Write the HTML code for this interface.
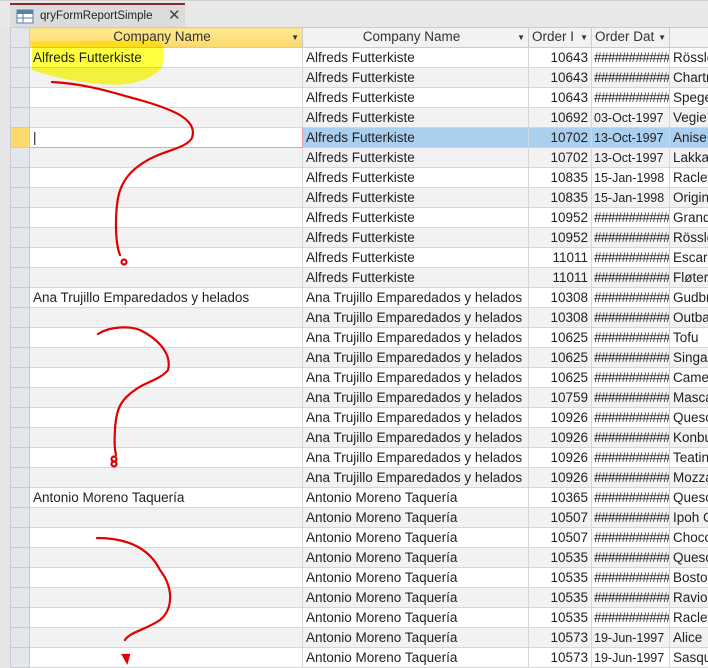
<!DOCTYPE html>
<html><head><meta charset="utf-8"><style>
*{margin:0;padding:0;box-sizing:border-box}
body{width:708px;height:665px;overflow:hidden;background:#e6e6e6;font-family:"Liberation Sans",sans-serif;font-size:13.5px;color:#222;position:relative}
#tabbar{position:absolute;left:0;top:0;width:708px;height:27px;background:#e8e8e8;border-top:1px solid #d0d0d0}
#tab{position:absolute;left:10px;top:2px;width:175px;height:25px;background:#dcdcdc;border-top:2px solid #8b2a2a}
#tab .t{position:absolute;left:30px;top:5px;font-size:11.5px;color:#222}
#tab .x{position:absolute;left:158px;top:1px;font-size:15px;color:#444}
#grid{position:absolute;left:10px;top:27px;width:760px}
table{border-collapse:collapse;table-layout:fixed;width:709px}
td{height:20px;border:1px solid #d4d7dc;white-space:nowrap;overflow:hidden;padding:0 3px;line-height:18px}
tr.h td{background:#e9edf2;border-color:#c8ccd2;color:#333}
tr.h td.y{background:linear-gradient(#fde993,#fcd96a);text-align:center}
td.s{background:#e3e6ea;border-color:#c8ccd2;padding:0}
tr:nth-child(even) td{background:#fff}
tr:nth-child(odd) td{background:#f2f2f2}
tr td.s{background:#e3e6ea!important}
td.n{text-align:right}
td.d{letter-spacing:-0.6px;padding:0 2px}
td.t{font-size:12.5px;padding:0 2px}
tr.sel td{background:#aacfef!important}
tr.sel td.s{background:#fcd96a!important}
tr.sel td.c1{background:#fff!important;border:1px solid #e8a0a8}
.dd{float:right;font-size:8px;margin-top:1px}
svg{position:absolute;left:0;top:0}
</style></head><body>
<div id="tabbar"><div id="tab">
<svg width="20" height="18" style="left:6px;top:3px"><rect x="1" y="2" width="16" height="13" fill="#fff" stroke="#5a7fa8"/><rect x="1" y="2" width="16" height="4" fill="#5a7fa8"/><line x1="1" y1="10" x2="17" y2="10" stroke="#5a7fa8"/><line x1="7" y1="6" x2="7" y2="15" stroke="#5a7fa8"/></svg>
<span class="t">qryFormReportSimple</span><span class="x">✕</span></div></div>
<div id="grid"><table>
<colgroup><col style="width:19px"><col style="width:273px"><col style="width:226px"><col style="width:63px"><col style="width:78px"><col style="width:50px"></colgroup>
<tr class="h"><td class="s"></td><td class="y">Company Name<span class="dd">▼</span></td><td style="text-align:center">Company Name<span class="dd">▼</span></td><td>Order I <span class="dd">▼</span></td><td>Order Dat <span class="dd">▼</span></td><td></td></tr>
<tr><td class="s"></td><td>Alfreds Futterkiste</td><td>Alfreds Futterkiste</td><td class="n">10643</td><td class="d">###########</td><td>Rössle</td></tr>
<tr><td class="s"></td><td></td><td>Alfreds Futterkiste</td><td class="n">10643</td><td class="d">###########</td><td>Chartr</td></tr>
<tr><td class="s"></td><td></td><td>Alfreds Futterkiste</td><td class="n">10643</td><td class="d">###########</td><td>Spege</td></tr>
<tr><td class="s"></td><td></td><td>Alfreds Futterkiste</td><td class="n">10692</td><td class="t">03-Oct-1997</td><td>Vegie</td></tr>
<tr class="sel"><td class="s"></td><td class="c1">|</td><td>Alfreds Futterkiste</td><td class="n">10702</td><td class="t">13-Oct-1997</td><td>Anise</td></tr>
<tr><td class="s"></td><td></td><td>Alfreds Futterkiste</td><td class="n">10702</td><td class="t">13-Oct-1997</td><td>Lakka</td></tr>
<tr><td class="s"></td><td></td><td>Alfreds Futterkiste</td><td class="n">10835</td><td class="t">15-Jan-1998</td><td>Raclet</td></tr>
<tr><td class="s"></td><td></td><td>Alfreds Futterkiste</td><td class="n">10835</td><td class="t">15-Jan-1998</td><td>Origin</td></tr>
<tr><td class="s"></td><td></td><td>Alfreds Futterkiste</td><td class="n">10952</td><td class="d">###########</td><td>Grand</td></tr>
<tr><td class="s"></td><td></td><td>Alfreds Futterkiste</td><td class="n">10952</td><td class="d">###########</td><td>Rössle</td></tr>
<tr><td class="s"></td><td></td><td>Alfreds Futterkiste</td><td class="n">11011</td><td class="d">###########</td><td>Escarg</td></tr>
<tr><td class="s"></td><td></td><td>Alfreds Futterkiste</td><td class="n">11011</td><td class="d">###########</td><td>Fløter</td></tr>
<tr><td class="s"></td><td>Ana Trujillo Emparedados y helados</td><td>Ana Trujillo Emparedados y helados</td><td class="n">10308</td><td class="d">###########</td><td>Gudbr</td></tr>
<tr><td class="s"></td><td></td><td>Ana Trujillo Emparedados y helados</td><td class="n">10308</td><td class="d">###########</td><td>Outba</td></tr>
<tr><td class="s"></td><td></td><td>Ana Trujillo Emparedados y helados</td><td class="n">10625</td><td class="d">###########</td><td>Tofu</td></tr>
<tr><td class="s"></td><td></td><td>Ana Trujillo Emparedados y helados</td><td class="n">10625</td><td class="d">###########</td><td>Singap</td></tr>
<tr><td class="s"></td><td></td><td>Ana Trujillo Emparedados y helados</td><td class="n">10625</td><td class="d">###########</td><td>Came</td></tr>
<tr><td class="s"></td><td></td><td>Ana Trujillo Emparedados y helados</td><td class="n">10759</td><td class="d">###########</td><td>Masca</td></tr>
<tr><td class="s"></td><td></td><td>Ana Trujillo Emparedados y helados</td><td class="n">10926</td><td class="d">###########</td><td>Queso</td></tr>
<tr><td class="s"></td><td></td><td>Ana Trujillo Emparedados y helados</td><td class="n">10926</td><td class="d">###########</td><td>Konbu</td></tr>
<tr><td class="s"></td><td></td><td>Ana Trujillo Emparedados y helados</td><td class="n">10926</td><td class="d">###########</td><td>Teatin</td></tr>
<tr><td class="s"></td><td></td><td>Ana Trujillo Emparedados y helados</td><td class="n">10926</td><td class="d">###########</td><td>Mozza</td></tr>
<tr><td class="s"></td><td>Antonio Moreno Taquería</td><td>Antonio Moreno Taquería</td><td class="n">10365</td><td class="d">###########</td><td>Queso</td></tr>
<tr><td class="s"></td><td></td><td>Antonio Moreno Taquería</td><td class="n">10507</td><td class="d">###########</td><td>Ipoh C</td></tr>
<tr><td class="s"></td><td></td><td>Antonio Moreno Taquería</td><td class="n">10507</td><td class="d">###########</td><td>Choco</td></tr>
<tr><td class="s"></td><td></td><td>Antonio Moreno Taquería</td><td class="n">10535</td><td class="d">###########</td><td>Queso</td></tr>
<tr><td class="s"></td><td></td><td>Antonio Moreno Taquería</td><td class="n">10535</td><td class="d">###########</td><td>Bosto</td></tr>
<tr><td class="s"></td><td></td><td>Antonio Moreno Taquería</td><td class="n">10535</td><td class="d">###########</td><td>Ravio</td></tr>
<tr><td class="s"></td><td></td><td>Antonio Moreno Taquería</td><td class="n">10535</td><td class="d">###########</td><td>Raclet</td></tr>
<tr><td class="s"></td><td></td><td>Antonio Moreno Taquería</td><td class="n">10573</td><td class="t">19-Jun-1997</td><td>Alice</td></tr>
<tr><td class="s"></td><td></td><td>Antonio Moreno Taquería</td><td class="n">10573</td><td class="t">19-Jun-1997</td><td>Sasqu</td></tr>
</table></div>
<svg width="708" height="665" style="pointer-events:none">
<path d="M32 42 L160 40 Q168 55 160 70 Q140 88 100 84 Q60 80 32 70 Z" fill="#ffff00" opacity="0.75" style="mix-blend-mode:multiply"/>
<g fill="none" stroke="#e00000" stroke-width="2.2" stroke-linecap="round">
<path d="M52 82 C90 84 120 95 140 100 C175 110 198 120 192 138 C185 150 160 150 140 165 C118 180 116 200 116 225 C116 240 118 250 120 255"/>
<circle cx="124" cy="262" r="2.5"/>
<path d="M98 334 C110 326 130 326 140 330 C160 340 172 355 168 370 C160 380 145 382 135 390 C120 400 116 410 115 430 C114 445 115 450 116 455"/>
<circle cx="114" cy="459" r="2.5"/><circle cx="114" cy="464" r="2.5"/>
<path d="M97 538 C130 538 150 550 160 570 C175 590 172 610 160 620 C145 630 130 632 125 640"/>
<path d="M123 655 L127 662 L129 655 Z" fill="#e00000"/>
</g></svg>
</body></html>
